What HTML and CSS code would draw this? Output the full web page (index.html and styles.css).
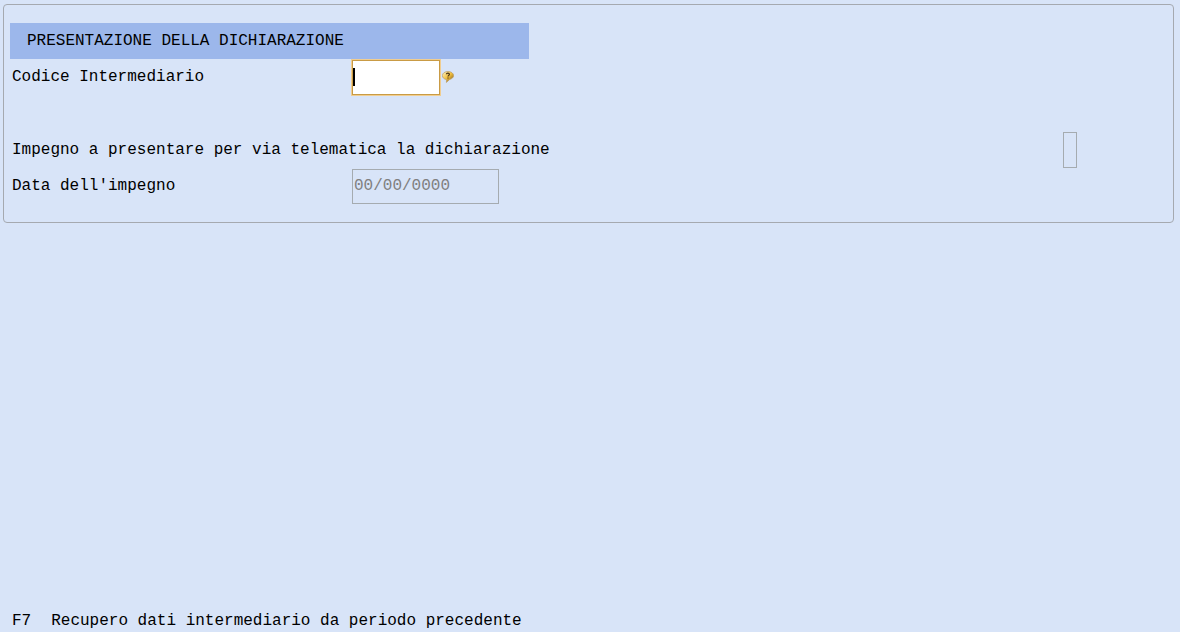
FILE: index.html
```html
<!DOCTYPE html>
<html lang="it">
<head>
<meta charset="utf-8">
<meta name="viewport" content="width=device-width, initial-scale=1">
<title>Presentazione della dichiarazione</title>
<link rel="stylesheet" href="styles.css">
</head>
<body>
<main class="panel">
  <h1 class="title">PRESENTAZIONE DELLA DICHIARAZIONE</h1>
  <div class="row">
    <label class="label" for="codice">Codice Intermediario</label>
    <span class="caret-box"><input class="field field-code" id="codice" type="text"></span>
    <button class="help" type="button" aria-label="Aiuto">
      <svg viewBox="0 0 12 12" width="12" height="12" aria-hidden="true">
        <defs>
          <linearGradient id="bubble" x1="0" y1="0" x2="1" y2="1">
            <stop offset="0" stop-color="#fff6c8"/>
            <stop offset="0.5" stop-color="#f0bd3c"/>
            <stop offset="1" stop-color="#6e4c1c"/>
          </linearGradient>
        </defs>
        <path d="M6 .5C9 .5 11.6 2.2 11.6 4.6C11.6 6.6 9.6 8 7.6 8.5L4.4 11.4L4.6 8.6C2 8.2.4 6.6.4 4.6C.4 2.2 3 .5 6 .5Z" fill="url(#bubble)" stroke="#b89a62" stroke-width=".7"/>
        <path d="M4.4 3.2C4.5 1.7 7.5 1.7 7.4 3.4C7.3 4.4 6 4.4 6 5.6" fill="none" stroke="#4a3518" stroke-width="1.2"/>
        <path d="M5.4 6.4h1.2v1.2H5.4z" fill="#4a3518"/>
      </svg>
    </button>
  </div>
  <div class="row row-spaced">
    <label class="label" for="impegno">Impegno a presentare per via telematica la dichiarazione</label>
    <input class="field field-flag" id="impegno" type="text" maxlength="1" disabled>
  </div>
  <div class="row">
    <label class="label" for="data">Data dell'impegno</label>
    <input class="field field-date" id="data" type="text" value="00/00/0000" disabled>
  </div>
</main>
<footer class="keys"><kbd class="key">F7</kbd><span>Recupero dati intermediario da periodo precedente</span></footer>
</body>
</html>
```
FILE: styles.css
```css
* { box-sizing: border-box; }
body {
  margin: 0;
  min-height: 100vh;
  padding: 4px 6px 0 3px;
  display: flex;
  flex-direction: column;
  justify-content: space-between;
  background: #d8e4f8;
  color: #000;
  font: 16px/36px "Courier New", "Liberation Mono", monospace;
}
.panel {
  border: 1px solid #a5a9b0;
  border-radius: 4px;
  padding: 18px 6px;
}
.title {
  margin: 0;
  padding-left: 17px;
  width: 100%;
  max-width: 519px;
  font-size: 16px;
  font-weight: 400;
  background: #9cb7eb;
}
.row {
  display: flex;
  align-items: center;
  height: 36px;
  padding-left: 2px;
}
.label { min-width: 340px; }
.row-spaced {
  margin-top: 37px;
  justify-content: space-between;
  padding-right: 90px;
}
.field {
  height: 35px;
  border: 1px solid #a5abb0;
  border-radius: 0;
  padding: 0 1px;
  background: transparent;
  color: #808080;
  font: inherit;
  outline: none;
}
.caret-box {
  position: relative;
  display: flex;
}
.caret-box::after {
  content: "";
  position: absolute;
  left: 1px;
  top: 8px;
  width: 2px;
  height: 18px;
  background: #000;
}
.field-code {
  width: 88px;
  background: #fff;
  color: #000;
  border-color: #c99b45;
  box-shadow: 0 0 0 1px #f0cd90;
}
.field-flag {
  width: 14px;
  height: 36px;
  padding: 0;
}
.field-date { width: 147px; }
.help {
  display: flex;
  margin-left: 2px;
  padding: 0;
  border: 0;
  background: none;
}
.keys {
  display: flex;
  gap: 20px;
  padding-left: 9px;
  line-height: 22px;
}
.key { font: inherit; }
```
